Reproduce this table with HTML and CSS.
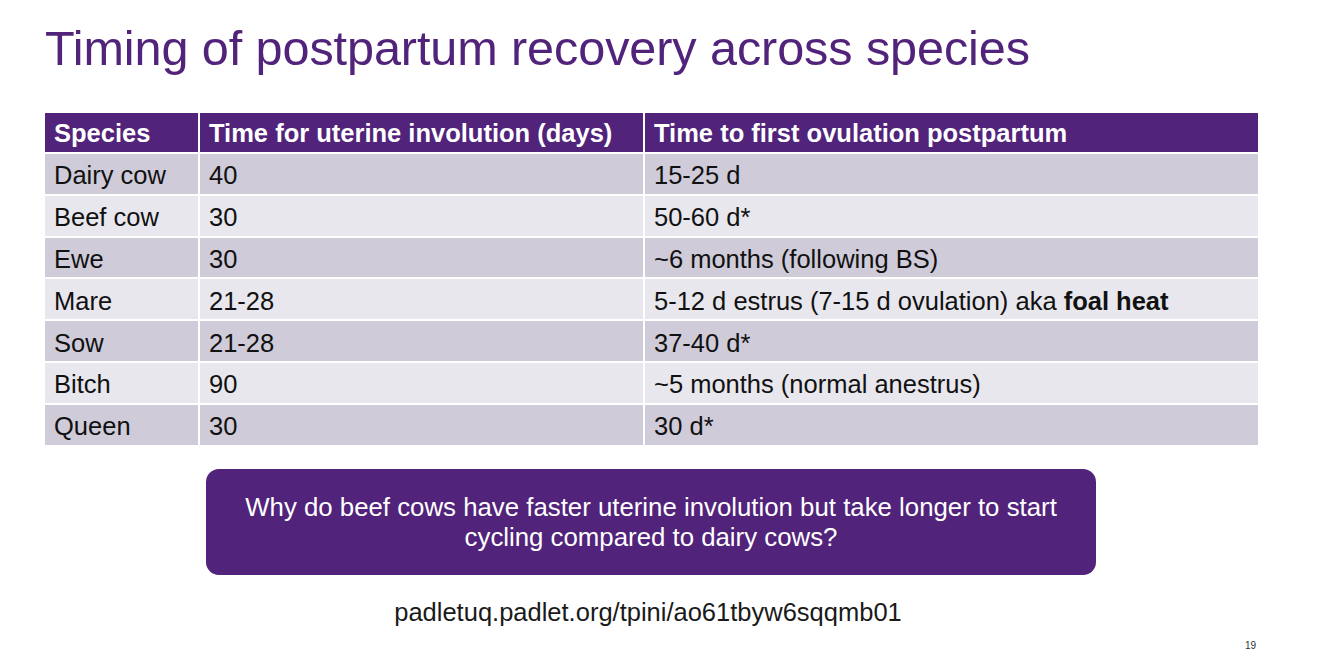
FILE: index.html
```html
<!DOCTYPE html>
<html lang="en">
<head>
<meta charset="utf-8">
<title>Timing of postpartum recovery across species</title>
<link rel="stylesheet" href="styles.css">
</head>
<body>
<div class="slide">
  <h1 class="title">Timing of postpartum recovery across species</h1>
  <table class="data">
    <colgroup>
      <col class="c1"><col class="c2"><col class="c3">
    </colgroup>
    <thead>
      <tr><th>Species</th><th>Time for uterine involution (days)</th><th>Time to first ovulation postpartum</th></tr>
    </thead>
    <tbody>
      <tr class="dark"><td>Dairy cow</td><td>40</td><td>15-25 d</td></tr>
      <tr class="light"><td>Beef cow</td><td>30</td><td>50-60 d*</td></tr>
      <tr class="dark"><td>Ewe</td><td>30</td><td>~6 months (following BS)</td></tr>
      <tr class="light"><td>Mare</td><td>21-28</td><td>5-12 d estrus (7-15 d ovulation) aka <b>foal heat</b></td></tr>
      <tr class="dark"><td>Sow</td><td>21-28</td><td>37-40 d*</td></tr>
      <tr class="light"><td>Bitch</td><td>90</td><td>~5 months (normal anestrus)</td></tr>
      <tr class="dark"><td>Queen</td><td>30</td><td>30 d*</td></tr>
    </tbody>
  </table>
  <div class="question">
    <p>Why do beef cows have faster uterine involution but take longer to start<br>cycling compared to dairy cows?</p>
  </div>
  <p class="url">padletuq.padlet.org/tpini/ao61tbyw6sqqmb01</p>
  <div class="pagenum">19</div>
</div>
</body>
</html>
```

FILE: styles.css
```css
html, body {
  margin: 0;
  padding: 0;
  background: #ffffff;
}
body {
  font-family: "Liberation Sans", Arial, sans-serif;
  overflow: hidden;
}
.slide {
  position: relative;
  width: 1334px;
  height: 653px;
  overflow: hidden;
  padding: 0 0 0 43px;
  box-sizing: border-box;
}
.title {
  margin: 0;
  padding: 20px 0 0 2px;
  font-weight: normal;
  font-size: 48.6px;
  line-height: 56px;
  color: #51237a;
  letter-spacing: -0.1px;
  white-space: nowrap;
}
.data {
  margin-top: 35px;
  border-collapse: collapse;
  width: 1215px;
  table-layout: fixed;
  font-size: 25.5px;
}
.c1 { width: 155px; }
.c2 { width: 445px; }
.c3 { width: 615px; }
.data th, .data td {
  border: 2px solid #ffffff;
  text-align: left;
  white-space: nowrap;
}
.data th {
  background: #51237a;
  color: #ffffff;
  font-weight: bold;
  height: 37px;
  padding: 2px 0 0 9px;
  line-height: 37px;
}
.data td {
  color: #111111;
  height: 36.8px;
  padding: 3px 0 0 9px;
  line-height: 36px;
}
.data tr.dark td { background: #cfcbd9; }
.data tr.light td { background: #e8e7ed; }
.question {
  margin: 22px 0 0 163px;
  width: 890px;
  height: 106px;
  background: #51237a;
  border-radius: 13px;
  display: flex;
  align-items: center;
  justify-content: center;
}
.question p {
  margin: 0;
  color: #ffffff;
  text-align: center;
  font-size: 25.8px;
  line-height: 30px;
  white-space: nowrap;
}
.url {
  margin: 23px 0 0 0;
  width: 1210px;
  text-align: center;
  font-size: 25.5px;
  line-height: 28px;
  color: #1a1a1a;
}
.pagenum {
  position: absolute;
  left: 1245px;
  top: 640px;
  font-size: 10px;
  line-height: 12px;
  color: #333333;
}
```
